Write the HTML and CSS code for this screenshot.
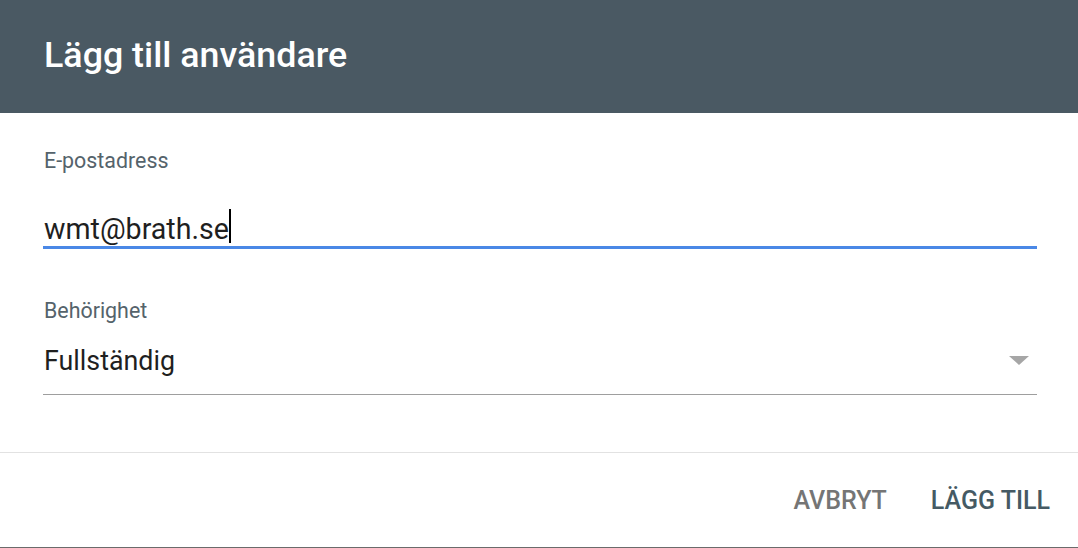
FILE: index.html
```html
<!DOCTYPE html>
<html lang="sv">
<head>
<meta charset="utf-8">
<title>Lägg till användare</title>
<link rel="stylesheet" href="styles.css">
</head>
<body>
<div class="dialog">
  <header class="dialog-header">
    <h1 class="dialog-title">Lägg till användare</h1>
  </header>
  <main class="dialog-body">
    <div class="field field-email">
      <label class="field-label">E-postadress</label>
      <div class="field-input field-input-active">
        <span class="field-value">wmt@brath.se</span><span class="caret"></span>
      </div>
    </div>
    <div class="field field-select">
      <label class="field-label">Behörighet</label>
      <div class="field-input field-input-select">
        <span class="field-value">Fullständig</span>
        <span class="select-arrow"></span>
      </div>
    </div>
  </main>
  <footer class="dialog-footer">
    <button class="btn btn-cancel">AVBRYT</button>
    <button class="btn btn-primary">LÄGG TILL</button>
  </footer>
</div>
</body>
</html>
```

FILE: styles.css
```css
html, body {
  margin: 0;
  padding: 0;
  background: #ffffff;
}

body {
  font-family: Roboto, "Liberation Sans", Arial, sans-serif;
  width: 1078px;
  height: 548px;
  overflow: hidden;
}

.dialog {
  height: 547px;
  border-bottom: 1px solid #6b6b6b;
  display: flex;
  flex-direction: column;
  background: #ffffff;
}

.dialog-header {
  height: 113px;
  flex: none;
  background: #4a5963;
  display: flex;
  align-items: center;
  padding: 0 44px;
  box-sizing: border-box;
}

.dialog-title {
  margin: 0;
  color: #ffffff;
  font-size: 35.8px;
  font-weight: 500;
  line-height: 42px;
  padding-bottom: 3px;
}

.dialog-body {
  padding: 0 41px 0 43px;
  height: 340px;
  flex: none;
  box-sizing: border-box;
  border-bottom: 1px solid #e2e2e2;
}

.field {
  display: flex;
  flex-direction: column;
}

.field-email {
  padding-top: 36px;
}

.field-select {
  padding-top: 50px;
}

.field-label {
  color: #55636b;
  font-size: 21.4px;
  line-height: 24px;
  padding-left: 1px;
}

.field-input {
  display: flex;
  align-items: flex-end;
  padding-left: 1px;
  color: #1f1f1f;
  box-sizing: border-box;
}

.field-input-active {
  height: 76px;
  font-size: 28.6px;
  border-bottom: 3px solid #4a88e6;
  padding-bottom: 0;
}

.field-input-active .field-value {
  line-height: 34px;
}

.field-input-select {
  height: 72px;
  font-size: 26.8px;
  border-bottom: 1px solid #9e9e9e;
  padding-bottom: 17px;
  justify-content: space-between;
}

.field-input-select .field-value {
  line-height: 32px;
}

.caret {
  display: inline-block;
  flex: none;
  width: 2px;
  height: 34px;
  background: #000000;
  margin-bottom: 3px;
}

.select-arrow {
  width: 0;
  height: 0;
  border-left: 10px solid transparent;
  border-right: 10px solid transparent;
  border-top: 9px solid #a6a6a6;
  margin-right: 8px;
  margin-bottom: 12px;
}

.dialog-footer {
  flex: 1;
  display: flex;
  justify-content: flex-end;
  align-items: center;
  gap: 20px;
  padding: 0 16px 0 0;
}

.btn {
  background: none;
  border: none;
  font-family: Roboto, "Liberation Sans", Arial, sans-serif;
  font-size: 25px;
  font-weight: 500;
  padding: 8px 12px;
  letter-spacing: 0;
  cursor: pointer;
}

.btn-cancel {
  color: #757575;
}

.btn-primary {
  color: #455a64;
}
```
